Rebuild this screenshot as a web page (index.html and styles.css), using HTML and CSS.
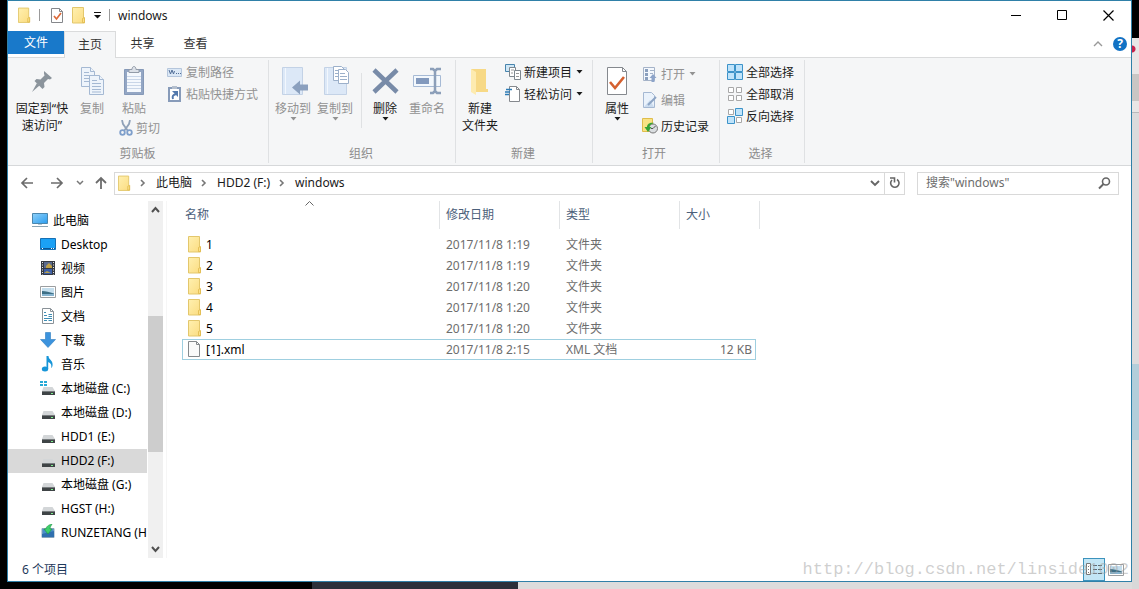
FILE: index.html
```html
<!DOCTYPE html>
<html lang="zh-CN">
<head>
<meta charset="utf-8">
<title>windows</title>
<link rel="stylesheet" href="styles.css">
</head>
<body>
<svg class="sprite" aria-hidden="true">
  <linearGradient id="g-folder" x1="0" y1="0" x2="1" y2="1"><stop offset="0" stop-color="#fff0b0"/><stop offset="1" stop-color="#fbdc80"/></linearGradient>
  <linearGradient id="g-blue" x1="0" y1="0" x2="1" y2="1"><stop offset="0" stop-color="#8fd0f8"/><stop offset="1" stop-color="#2a9df0"/></linearGradient>
  <symbol id="folder" viewBox="0 0 14 17"><path d="M.5 .5h11v11.500l1-1v5h-12z" fill="url(#g-folder)" stroke="#e3c76c"/><path d="M10.500 15.500v-4l2-1v5z" fill="#fbe08a" stroke="#dfb94a" stroke-width=".8"/></symbol>
  <symbol id="drive" viewBox="0 0 16 16"><path d="M3.500 7h9L15 11H2z" fill="#d3d6d8"/><path d="M2 11h13v4H2z" fill="#3f4446"/><path d="M2 11h13v1H2z" fill="#777c7e"/><path d="M11 13h2v1h-2z" fill="#7cf08b"/></symbol>
  <symbol id="down" viewBox="0 0 7 4"><path d="M.5 0h6L3.500 3.500z" fill="currentColor"/></symbol>
  <symbol id="chev" viewBox="0 0 6 8"><path d="M1 1l3 3-3 3" fill="none" stroke="#777" stroke-width="1.600"/></symbol>
  <symbol id="picture" viewBox="0 0 16 16"><path d="M.5 2.500h15v11H.5z" fill="#fff" stroke="#9b9ea0"/><path d="M2 4h12v8H2z" fill="#c4deed"/><path d="M2 7c4 0 7 1 12 2.500V12H2z" fill="#3d6f86"/><path d="M2 10h12v2H2z" fill="#85b3cf"/></symbol>
</svg>

<div class="desktop">
<div class="window">
  <header class="titlebar">
    <svg class="i-folder"><use href="#folder"/></svg>
    <span class="tick"></span>
    <svg width="16" height="17" viewBox="0 0 16 17"><path d="M3.500 1.500h8l3 3v11h-11z" fill="#fff" stroke="#85878b"/><path d="M11.500 1.500v3h3" fill="none" stroke="#85878b"/><path d="M6 9l2.500 3L13 6" fill="none" stroke="#dd6a3a" stroke-width="1.700"/></svg>
    <svg class="i-folder"><use href="#folder"/></svg>
    <svg width="7" height="7" viewBox="0 0 7 7"><path d="M0 0h7v1H0zM0 3h7L3.500 6.500z" fill="#111"/></svg>
    <span class="tick"></span>
    <span class="caption">windows</span>
    <button class="winbtn" aria-label="最小化"><svg width="11" height="11"><path d="M0 5.500h10" stroke="#000"/></svg></button>
    <button class="winbtn" aria-label="最大化"><svg width="11" height="11"><path d="M.5 .5h9v9h-9z" fill="none" stroke="#000"/></svg></button>
    <button class="winbtn" aria-label="关闭"><svg width="11" height="11"><path d="M.5 .5l10 10M10.500 .5l-10 10" stroke="#000" stroke-width="1.200"/></svg></button>
  </header>

  <nav class="tabs">
    <button class="tab file">文件</button>
    <button class="tab active">主页</button>
    <button class="tab">共享</button>
    <button class="tab">查看</button>
    <svg class="collapse" width="10" height="6"><path d="M1 5l4-4 4 4" fill="none" stroke="#999" stroke-width="1.400"/></svg>
    <button class="help" aria-label="帮助">?</button>
  </nav>

  <section class="ribbon">
    <div class="group g-clip">
      <div class="tools">
        <button class="big w60"><svg width="24" height="30" viewBox="0 0 24 30"><g fill="#8b949c"><path d="M14 5l8 7-2 1.500-2-.5-4 4 .5 4-2 2-8-8 2-2 4 .5 4-4-.500-2z"/><path d="M7 17l2.500 2.500-7.500 6.500z"/></g></svg>固定到“快<br>速访问”</button>
        <button class="big w40 off"><svg width="26" height="30" viewBox="0 0 26 30"><g fill="#eef4fb" stroke="#a5b9d3"><path d="M2.500 1.500h9l4 4v15h-13z"/><path d="M11.500 1.500v4h4M5 6.500h5M5 9.500h8M5 12.500h8M5 15.500h8"/><path d="M10.500 9.500h10l4 4v15h-14z"/><path d="M20.500 9.500v4h4M13 14.500h5M13 17.500h9M13 20.500h9M13 23.500h9M13 26h9"/></g></svg>复制</button>
        <div class="paste">
          <button class="big w40 off"><svg width="22" height="30" viewBox="0 0 22 30"><path d="M1.500 3.500h19v25h-19z" fill="#93a6c4" stroke="#8599b8"/><path d="M4 6h14v20H4z" fill="#f4f8fd"/><path d="M6 5.500V3.500h3c0-4 4-4 4 0h3v3H6z" fill="#dce1e8" stroke="#929ba8"/><path d="M4 10.500h14M4 13.500h14M4 16.500h14M4 19.500h14M4 22.500h14" stroke="#c9d6e8"/></svg>粘贴</button>
          <button class="small off"><svg width="14" height="16" viewBox="0 0 14 16"><path d="M3 0l1 4 5 7M11 0l-1 4-5 7" fill="none" stroke="#8fa1b8" stroke-width="1.800"/><circle cx="3.500" cy="12.500" r="2.300" fill="none" stroke="#7f9fcb" stroke-width="1.800"/><circle cx="10.500" cy="12.500" r="2.300" fill="none" stroke="#7f9fcb" stroke-width="1.800"/></svg>剪切</button>
        </div>
        <div class="stack">
          <button class="small off"><svg width="16" height="16" viewBox="0 0 16 16"><path d="M.5 4.500h14v8H.5z" fill="#dbe8f6" stroke="#b5c6dc"/><path d="M2 6l1.500 4L5 6l1.500 4L7.500 7M9 9.500h1M11 9.500h1M13 9.500h1" fill="none" stroke="#536f98"/></svg>复制路径</button>
          <button class="small off"><svg width="16" height="16" viewBox="0 0 16 16"><path d="M2 2h11v13H2z" fill="#fff" stroke="#879bb9" stroke-width="2"/><path d="M5 0h5v3H5z" fill="#b4bfcd"/><path d="M6 13c-1-3 0-4 3-5" fill="none" stroke="#5379ad" stroke-width="2"/><path d="M5 5h6v6z" fill="#5379ad"/></svg>粘贴快捷方式</button>
        </div>
      </div>
      <div class="gname">剪贴板</div>
    </div>

    <div class="group g-org">
      <div class="tools">
        <button class="big w42 off"><svg width="30" height="30" viewBox="0 0 30 30"><path d="M4.500 1.500h20v27h-20z" fill="#dce8f7" stroke="#c3d2e6"/><path d="M7.500 2v26" stroke="#f2f7fd"/><path d="M14 21.500l8-7v4h8v6h-8v4z" fill="#8ba0be"/></svg>移动到<svg class="dd"><use href="#down"/></svg></button>
        <button class="big w42 off"><svg width="30" height="30" viewBox="0 0 30 30"><path d="M4.500 1.500h22v27h-22z" fill="#dce8f7" stroke="#c3d2e6"/><path d="M7.500 2v26" stroke="#f2f7fd"/><g fill="#fff" stroke="#9cb0ca"><path d="M13.500 .5h8l3 3v11h-11z"/><path d="M15 4.500h5M15 7.500h5M15 10.500h5"/><path d="M18.500 3.500h7l3 3v11h-10z"/><path d="M20 7.500h5M20 10.500h7M20 13.500h7"/></g></svg>复制到<svg class="dd"><use href="#down"/></svg></button>
        <span class="split"></span>
        <button class="big w42"><svg width="28" height="30" viewBox="0 0 28 30"><path d="M3 4l23 22M26 4L3 26" stroke="#788ba8" stroke-width="4.500"/></svg>删除<svg class="dd"><use href="#down"/></svg></button>
        <button class="big w42 off"><svg width="30" height="30" viewBox="0 0 30 30"><path d="M1.500 9.500h27v11h-27z" fill="#f3f8fd" stroke="#a6bad5"/><path d="M4 12h13v6H4z" fill="#8299bd"/><path d="M18 3h3l2 2 2-2h4M18 27h3l2-2 2 2h4M23 4v22" fill="none" stroke="#8c9fb9" stroke-width="2.500"/></svg>重命名</button>
      </div>
      <div class="gname">组织</div>
    </div>

    <div class="group g-new">
      <div class="tools">
        <button class="big w42"><svg width="22" height="30" viewBox="0 0 22 30"><path d="M2 3h15v20h2v3H7z" fill="#f7d986"/><path d="M2 3l5 3v23l-5-3z" fill="#fdebb0"/></svg>新建<br>文件夹</button>
        <div class="stack">
          <button class="small"><svg width="16" height="16" viewBox="0 0 16 16"><path d="M.5 .5h9v7h-9z" fill="#cfe7f6" stroke="#4784ad"/><g fill="#fff" stroke="#7e878e"><path d="M4.500 3.500h6v9h-6z"/><path d="M9.500 6.500h6v9h-6z"/></g><path d="M11 9.500h3M11 12.500h3M6 6h3M6 9h2" stroke="#999"/></svg>新建项目<svg class="dd"><use href="#down"/></svg></button>
          <button class="small"><svg width="16" height="16" viewBox="0 0 16 16"><path d="M4.500 .5h7l3 3v12h-10z" fill="#fff" stroke="#85898e"/><path d="M11.500 .5v3h3" fill="none" stroke="#85898e"/><path d="M1 3.500h6M0 6h5M0 8.500h4" stroke="#2c7bb5" stroke-width="1.300"/></svg>轻松访问<svg class="dd"><use href="#down"/></svg></button>
        </div>
      </div>
      <div class="gname">新建</div>
    </div>

    <div class="group g-open">
      <div class="tools">
        <button class="big w36"><svg width="22" height="30" viewBox="0 0 22 30"><path d="M1.500 1.500h15l4 4v23h-19z" fill="#fff" stroke="#85898e"/><path d="M16.500 1.500v4h4" fill="none" stroke="#85898e"/><path d="M4 16l5 6 9-11" fill="none" stroke="#d5602f" stroke-width="2.600"/></svg>属性<svg class="dd"><use href="#down"/></svg></button>
        <div class="stack tall">
          <button class="small off"><svg width="16" height="16" viewBox="0 0 16 16"><path d="M1.500 1.500h11v13h-11z" fill="#f4f8fd" stroke="#a5b3c8"/><path d="M3 3h3v3H3zM3 7h3v3H3zM3 11h3v3H3z" fill="#8ba0be"/><path d="M8 4.500h4M8 7.500h3" stroke="#a5b3c8"/><path d="M11 8l3.500 4H12.500v4h-3v-4H7.500z" fill="#8da4c9"/></svg>打开<svg class="dd"><use href="#down"/></svg></button>
          <button class="small off"><svg width="16" height="16" viewBox="0 0 16 16"><path d="M1.500 .5h8l3 3v12h-11z" fill="#eaf2fb" stroke="#a5b8d2"/><path d="M2 15l6-7 4 7z" fill="#cbdcef"/><path d="M6 13l8-8" stroke="#8da4c4" stroke-width="2"/></svg>编辑</button>
          <button class="small"><svg width="16" height="16" viewBox="0 0 16 16"><path d="M.5 .5h10v13H.5z" fill="#f9e284" stroke="#dfbd4c"/><circle cx="11" cy="10.500" r="4.500" fill="#d9dde0" stroke="#777"/><path d="M11 10.500l2.500-2.500M11 10.500H9" fill="none" stroke="#555"/><path d="M12 5C7 4 5 7 5 9H2.500L6 14l3.500-5H7.500c0-2 1.500-3 4.500-4z" fill="#36a335"/></svg>历史记录</button>
        </div>
      </div>
      <div class="gname">打开</div>
    </div>

    <div class="group g-sel">
      <div class="tools">
        <div class="stack">
          <button class="small"><svg width="16" height="16" viewBox="0 0 16 16"><g fill="#bfe3fa" stroke="#3c93c9"><path d="M.5 .5h7v7h-7zM8.500 .5h7v7h-7zM.5 8.500h7v7h-7zM8.500 8.500h7v7h-7z"/></g></svg>全部选择</button>
          <button class="small"><svg width="16" height="16" viewBox="0 0 16 16"><g fill="#fff" stroke="#a8a8a8"><path d="M1.500 1.500h5v5h-5zM9.500 1.500h5v5h-5zM1.500 9.500h5v5h-5zM9.500 9.500h5v5h-5z"/></g></svg>全部取消</button>
          <button class="small"><svg width="16" height="16" viewBox="0 0 16 16"><path d="M1.500 1.500h5v5h-5zM9.500 9.500h5v5h-5z" fill="#fff" stroke="#a8a8a8"/><path d="M8.500 .5h7v7h-7zM.5 8.500h7v7h-7z" fill="#bfe3fa" stroke="#3c93c9"/></svg>反向选择</button>
        </div>
      </div>
      <div class="gname">选择</div>
    </div>
  </section>

  <div class="address">
    <button class="nav" aria-label="后退"><svg width="14" height="12"><path d="M7 1L2 6l5 5M2 6h11" fill="none" stroke="#6c6c6c" stroke-width="1.700"/></svg></button>
    <button class="nav" aria-label="前进"><svg width="14" height="12"><path d="M7 1l5 5-5 5M12 6H1" fill="none" stroke="#6c6c6c" stroke-width="1.700"/></svg></button>
    <button class="nav recent" aria-label="最近"><svg width="8" height="6"><path d="M1 1l3 3 3-3" fill="none" stroke="#777" stroke-width="1.500"/></svg></button>
    <button class="nav up" aria-label="上移"><svg width="12" height="14"><path d="M1 7l5-5 5 5M6 2v11" fill="none" stroke="#6c6c6c" stroke-width="1.800"/></svg></button>
    <div class="path">
      <svg class="i-folder"><use href="#folder"/></svg>
      <svg class="chev"><use href="#chev"/></svg>
      <button class="crumb">此电脑</button>
      <svg class="chev"><use href="#chev"/></svg>
      <button class="crumb">HDD2 (F:)</button>
      <svg class="chev"><use href="#chev"/></svg>
      <button class="crumb">windows</button>
      <button class="drop" aria-label="历史"><svg width="10" height="7"><path d="M1 1l4 4 4-4" fill="none" stroke="#666" stroke-width="1.900"/></svg></button>
      <button class="refresh" aria-label="刷新"><svg width="12" height="12" viewBox="0 0 12 12"><path d="M8 2.500a4.200 4.200 0 1 1-5 .500" fill="none" stroke="#666" stroke-width="1.600"/><path d="M1 1h4.500v4.500" fill="none" stroke="#666" stroke-width="1.600"/></svg></button>
    </div>
    <label class="search">
      <input type="text" placeholder="搜索&quot;windows&quot;" aria-label="搜索">
      <svg width="13" height="13" viewBox="0 0 13 13"><circle cx="8" cy="4.500" r="3.500" fill="none" stroke="#666" stroke-width="1.600"/><path d="M5.500 7L1 11.500" stroke="#666" stroke-width="2"/></svg>
    </label>
  </div>

  <main class="content">
    <nav class="tree">
      <a class="root" href="#"><svg width="16" height="16" viewBox="0 0 16 16"><path d="M.5 1.500h15v10H.5z" fill="url(#g-blue)" stroke="#4b87ae"/><path d="M6 12h4v1H6z" fill="#b5c9d6"/><path d="M0 14.500h16" stroke="#8ba4b3"/></svg>此电脑</a>
      <a href="#"><svg width="16" height="16" viewBox="0 0 16 16"><path d="M.5 2.500h15v11H.5z" fill="#1ba1f5" stroke="#1670b4"/><path d="M1 12.500h14" stroke="#0b5796"/><path d="M2 12.500h1M11 12.500h1M13 12.500h1" stroke="#fff"/></svg>Desktop</a>
      <a href="#"><svg width="16" height="16" viewBox="0 0 16 16"><path d="M1 1h14v14H1z" fill="#353a42"/><path d="M4 2h8v6H4z" fill="#5a6a8d"/><path d="M4 9h8v5H4z" fill="#3c5fa8"/><path d="M6 6l3-3 3 3v2H6z" fill="#c0a146"/><path d="M4 13l3-2 4 2z" fill="#b8a04e"/><path d="M2.500 2v13M13.500 2v13" stroke="#e8e8e8" stroke-dasharray="1 1.500"/></svg>视频</a>
      <a href="#"><svg width="16" height="16"><use href="#picture"/></svg>图片</a>
      <a href="#"><svg width="16" height="16" viewBox="0 0 16 16"><path d="M2.500 .5h8l3 3v12h-11z" fill="#fff" stroke="#8a9298"/><path d="M10.500 .5v3h3" fill="none" stroke="#8a9298"/><path d="M4 4.500h2M4 7.500h3M8.500 6.500H12M8.500 8.500H12M4 10.500h8M4 12.500h3M8.500 12.500H12" stroke="#3e8db4"/></svg>文档</a>
      <a href="#"><svg width="16" height="16" viewBox="0 0 16 16"><path d="M5.500 .5h5v7h5L8 15.500.5 7.500h5z" fill="#3c93dd" stroke="#2c7cc0" stroke-width=".6"/></svg>下载</a>
      <a href="#"><svg width="16" height="16" viewBox="0 0 16 16"><ellipse cx="5" cy="13" rx="3.200" ry="2.500" fill="#1795d8"/><path d="M6.500 13V0h2c0 4 5 4 4 10-.500 1-.800 2-1.300 2 .8-4-1.200-5-3-6v7z" fill="#1795d8"/></svg>音乐</a>
      <a href="#"><svg width="16" height="16"><use href="#drive"/><path d="M0 1h3v2H0zM4 1h3v2H4zM0 4h3v2H0zM4 4h3v2H4z" fill="#27a9d6"/></svg>本地磁盘 (C:)</a>
      <a href="#"><svg width="16" height="16"><use href="#drive"/></svg>本地磁盘 (D:)</a>
      <a href="#"><svg width="16" height="16"><use href="#drive"/></svg>HDD1 (E:)</a>
      <a class="current" href="#"><svg width="16" height="16"><use href="#drive"/></svg>HDD2 (F:)</a>
      <a href="#"><svg width="16" height="16"><use href="#drive"/></svg>本地磁盘 (G:)</a>
      <a href="#"><svg width="16" height="16"><use href="#drive"/></svg>HGST (H:)</a>
      <a href="#"><svg width="16" height="16" viewBox="0 0 16 16"><path d="M2 4.500h12v9H2z" fill="#4a8fc9" stroke="#8aa5bb"/><path d="M2 10l12-3v6H2z" fill="#2f6fae"/><path d="M12 0C8 1 6 3 6 5H4l4 5 4-5h-2c0-2 1-3 2-5z" fill="#3fcf6b" stroke="#1f9a47" stroke-width=".7"/></svg>RUNZETANG (H:)</a>
    </nav>
    <div class="scroll">
      <svg width="9" height="7"><path d="M1 6l3.500-4L8 6" fill="none" stroke="#505050" stroke-width="2"/></svg>
      <span class="thumb"></span>
      <svg width="9" height="7"><path d="M1 1l3.500 4L8 1" fill="none" stroke="#505050" stroke-width="2"/></svg>
    </div>
    <section class="files">
      <table>
        <colgroup><col class="c-name"><col class="c-mid"><col class="c-mid"><col class="c-size"><col class="c-end"></colgroup>
        <thead><tr><th>名称<svg class="sort" width="9" height="5"><path d="M.5 4.500l4-4 4 4" fill="none" stroke="#666"/></svg></th><th>修改日期</th><th>类型</th><th colspan="2">大小</th></tr></thead>
        <tbody>
          <tr><td><span class="entry"><svg class="i-folder"><use href="#folder"/></svg>1</span></td><td>2017/11/8 1:19</td><td>文件夹</td><td></td></tr>
          <tr><td><span class="entry"><svg class="i-folder"><use href="#folder"/></svg>2</span></td><td>2017/11/8 1:19</td><td>文件夹</td><td></td></tr>
          <tr><td><span class="entry"><svg class="i-folder"><use href="#folder"/></svg>3</span></td><td>2017/11/8 1:20</td><td>文件夹</td><td></td></tr>
          <tr><td><span class="entry"><svg class="i-folder"><use href="#folder"/></svg>4</span></td><td>2017/11/8 1:20</td><td>文件夹</td><td></td></tr>
          <tr><td><span class="entry"><svg class="i-folder"><use href="#folder"/></svg>5</span></td><td>2017/11/8 1:20</td><td>文件夹</td><td></td></tr>
          <tr class="focus"><td><span class="entry"><svg width="14" height="17"><path d="M.5 .5h8l3 3v12H.5z" fill="#fafafa" stroke="#85898c"/><path d="M8.500 .5v3h3" fill="none" stroke="#85898c"/></svg>[1].xml</span></td><td>2017/11/8 2:15</td><td>XML 文档</td><td>12 KB</td></tr>
        </tbody>
      </table>
    </section>
  </main>

  <footer class="status">
    <span class="count">6 个项目</span>
    <button class="view on" aria-label="详细信息"><svg width="16" height="13"><path d="M.5 .5h4v11h-4z" fill="#fff" stroke="#777"/><path d="M2 3.500h1M2 6.500h1M2 9.500h1" stroke="#777"/><path d="M7 2.500h4M12 2.500h4M7 6.500h4M12 6.500h4M7 10.500h4M12 10.500h4" stroke="#5d6b73"/></svg></button>
    <button class="view" aria-label="缩略图"><svg width="16" height="16"><use href="#picture"/></svg></button>
    <span class="mark">http://blog.csdn.net/linside1002</span>
  </footer>
</div>
</div>
</body>
</html>
```

FILE: styles.css
```css
* { box-sizing: border-box; }
body {
  margin: 0;
  font: 12px/17px "Noto Sans", "Noto Sans CJK SC", sans-serif;
  color: #1a1a1a;
}
button {
  margin: 0;
  padding: 0;
  border: 0;
  background: none;
  font: inherit;
  color: inherit;
}
svg { display: block; flex: none; }
.sprite { position: absolute; width: 0; height: 0; }

.desktop {
  display: flex;
  min-height: 100vh;
  padding: 0 7px 7px;
  background:
    radial-gradient(circle at calc(100% - 7px) 49px, #c8224b 3px, transparent 4px),
    linear-gradient(#000 38px, #e9e6e6 38px 74px, #c9c6c4 74px 101px, #e9e6e6 101px 112px, #b9b9bb 112px 113px, #dcdbdc 113px 364px, #b3ceda 364px 440px, #d8d8d8 440px) right / 7px 100% no-repeat,
    linear-gradient(90deg, #000 312px, #2c303a 312px 518px, #dcdcdc 518px);
}
.window {
  flex: 1;
  min-width: 0;
  display: flex;
  flex-direction: column;
  border: 1px solid #2f80a8;
  background: #fff;
}

.titlebar {
  display: flex;
  align-items: center;
  gap: 8px;
  height: 30px;
  padding: 0 0 2px 10px;
}
.i-folder { width: 14px; height: 17px; }
.titlebar .i-folder:first-child { width: 13px; }
.tick { width: 1px; height: 12px; background: #9a9a9a; }
.caption { flex: 1; }
.winbtn {
  display: flex;
  align-items: center;
  justify-content: center;
  width: 46px;
  height: 28px;
}
.winbtn + .winbtn { margin-left: -8px; }

.tabs {
  display: flex;
  align-items: center;
  height: 27px;
  border-bottom: 1px solid #dadbdc;
}
.tab { width: 53px; height: 26px; padding-bottom: 2px; color: #333; }
.tab.file {
  align-self: flex-start;
  width: 56px;
  height: 23px;
  padding: 0;
  background: #1979ca;
  color: #fff;
}
.tab.active {
  width: 52px;
  height: 27px;
  margin-bottom: -1px;
  border: 1px solid #dadbdc;
  border-bottom: 0;
  background: #f5f6f7;
}
.collapse { margin-left: auto; }
.help {
  width: 14px;
  height: 14px;
  margin: 0 4px 0 10px;
  border-radius: 50%;
  background: #1272c4;
  color: #fff;
  font-weight: 700;
  line-height: 14px;
}

.ribbon {
  display: flex;
  height: 108px;
  padding: 2px 0;
  border-bottom: 1px solid #d6d8da;
  background: #f5f6f7;
}
.group {
  display: flex;
  flex-direction: column;
  justify-content: space-between;
  padding: 2px 0 1px;
  border-right: 1px solid #dfe1e3;
}
.g-clip { width: 261px; padding-left: 4px; }
.g-org { width: 187px; padding-left: 3px; }
.g-new { width: 137px; padding-left: 3px; }
.g-open { width: 127px; padding-left: 6px; }
.g-sel { width: 85px; padding-left: 7px; }
.gname { padding-right: 5px; color: #8c8c8c; text-align: center; }
.g-open .gname, .g-sel .gname { padding-right: 10px; }
.tools { display: flex; height: 80px; }
.big {
  display: flex;
  flex-direction: column;
  align-items: center;
  align-self: flex-start;
  padding-top: 4px;
  white-space: nowrap;
}
.big > svg:first-child { margin-bottom: 4px; }
.w60 { width: 60px; }
.w42 { width: 42px; }
.w40 { width: 40px; }
.w36 { width: 36px; }
.dd { width: 7px; height: 4px; }
.off { color: #929292; }
.small {
  display: flex;
  align-items: center;
  gap: 3px;
  height: 22px;
  white-space: nowrap;
}
.small .dd { margin-left: 1px; }
.tall .small { height: 26px; }
.paste { width: 54px; padding-left: 2px; }
.paste .small { margin-left: 5px; }
.stack { margin: -1px 0 0 1px; }
.g-new .stack { margin-left: 4px; }
.g-open .stack { margin-left: 7px; }
.g-sel .stack { margin-left: 0; }
.split { width: 1px; height: 55px; margin: 11px 2px 0 5px; background: #dfe1e3; }

.address {
  display: flex;
  align-items: center;
  height: 34px;
  padding: 0 12px 0 4px;
}
.nav {
  display: flex;
  justify-content: center;
  width: 30px;
}
.nav.recent { width: 16px; }
.nav.up { width: 26px; }
.path {
  flex: 1;
  display: flex;
  align-items: center;
  height: 23px;
  margin-right: 12px;
  padding-left: 3px;
  border: 1px solid #d9d9d9;
}
.path .i-folder { width: 13px; }
.crumb { padding-bottom: 2px; }
.chev { width: 6px; height: 8px; margin: 0 10px 0 9px; }
.drop { margin: 0 4px 0 auto; }
.refresh {
  display: flex;
  align-items: center;
  justify-content: center;
  width: 20px;
  height: 21px;
  border-left: 1px solid #d9d9d9;
}
.search {
  display: flex;
  align-items: center;
  width: 202px;
  height: 23px;
  padding: 0 7px 0 8px;
  border: 1px solid #d9d9d9;
}
.search input {
  flex: 1;
  min-width: 0;
  padding: 0 0 2px;
  border: 0;
  outline: 0;
  background: none;
  font: inherit;
}
.search input::placeholder { color: #6d6d6d; opacity: 1; }

.content { flex: 1; display: flex; padding-top: 1px; }
.tree { width: 139px; padding-top: 8px; overflow: hidden; }
.tree a {
  display: flex;
  align-items: center;
  gap: 5px;
  height: 24px;
  padding: 0 0 2px 32px;
  color: #000;
  text-decoration: none;
  white-space: nowrap;
}
.tree .root { padding-left: 24px; }
.tree .current { background: #d9d9d9; }
.scroll {
  display: flex;
  flex-direction: column;
  align-items: center;
  width: 15px;
  margin-left: 1px;
  padding: 5px 0;
  background: #f0f0f0;
}
.thumb { width: 15px; height: 136px; margin: 103px 0 auto; background: #cdcdcd; }
.files { flex: 1; margin-left: 3px; padding-left: 15px; border-left: 1px solid #f6f6f6; }
table { width: 578px; table-layout: fixed; border-collapse: separate; border-spacing: 0; }
.c-name { width: 258px; }
.c-mid { width: 120px; }
.c-size { width: 76px; }
.c-end { width: 4px; }
th {
  position: relative;
  height: 28px;
  padding: 0 6px 2px;
  border-right: 1px solid #e2e4e6;
  color: #4c607a;
  font-weight: 400;
  text-align: left;
}
th:first-child { padding-left: 3px; }
.sort { position: absolute; top: 0; left: calc(50% - 6px); }
thead::after { content: ""; display: block; height: 5px; }
td { height: 21px; padding: 0 6px; color: #6d6d6d; }
td:first-child { padding-left: 6px; color: #000; }
td:nth-child(4) { padding-right: 4px; text-align: right; }
.entry { display: flex; align-items: center; gap: 4px; }
.focus td { border: solid #9fcfe0; border-width: 1px 0; }
.focus td:first-child { padding-left: 5px; border-left-width: 1px; }
.focus td:last-child { padding-right: 3px; border-right-width: 1px; }

.status {
  position: relative;
  display: flex;
  align-items: center;
  height: 23px;
  padding: 0 4px 0 14px;
  color: #1e395b;
}
.count { flex: 1; }
.view {
  display: flex;
  align-items: center;
  justify-content: center;
  width: 22px;
  height: 23px;
}
.view.on { border: 1px solid #3c93bd; background: #c3e6f5; }
.mark {
  position: absolute;
  right: 2px;
  font: 17px/22px "Liberation Mono", monospace;
  color: rgba(160, 160, 160, .5);
}
```
